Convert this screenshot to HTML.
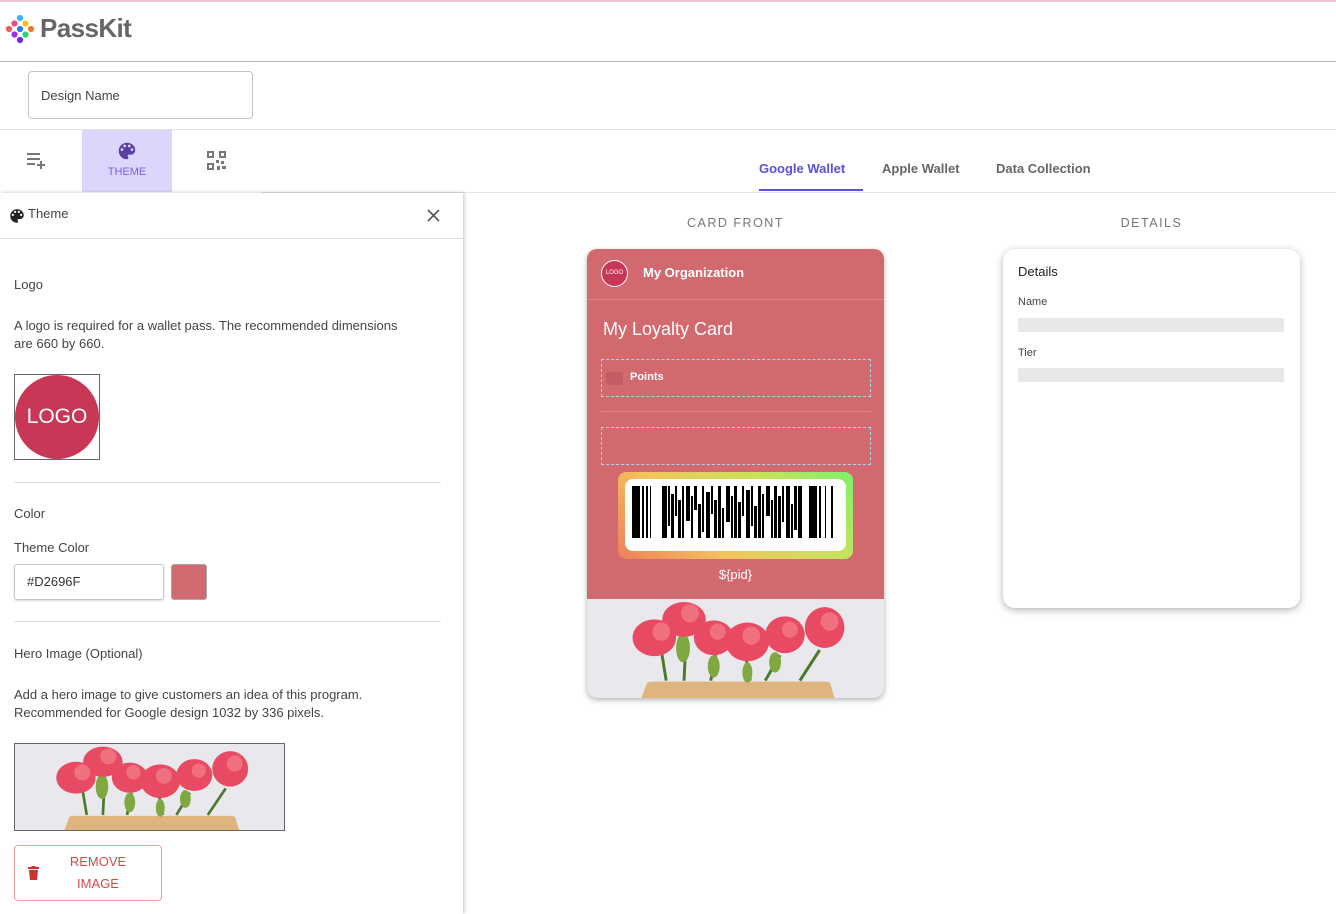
<!DOCTYPE html>
<html><head><meta charset="utf-8">
<style>
*{box-sizing:border-box;margin:0;padding:0}
body{width:1336px;height:914px;overflow:hidden;background:#fff;font-family:"Liberation Sans",sans-serif;color:#333;position:relative}
.a{position:absolute}
.t{font-size:13px;color:#444}
</style></head><body>
<div class="a" style="left:0;top:0;width:1336px;height:2px;background:#f2c6d6"></div>
<svg class="a" style="left:5px;top:14px" width="30" height="30" viewBox="0 0 30 30">
<circle cx="15" cy="4" r="3.1" fill="#3ab4f2"/><circle cx="9.5" cy="9.5" r="3.1" fill="#f24b7a"/><circle cx="20.5" cy="9.5" r="3.1" fill="#f5c518"/>
<circle cx="4" cy="15" r="3.1" fill="#f25a5a"/><circle cx="15" cy="15" r="3.1" fill="#2b7bf2"/><circle cx="26" cy="15" r="3.1" fill="#f27b2b"/>
<circle cx="9.5" cy="20.5" r="3.1" fill="#9b30e8"/><circle cx="20.5" cy="20.5" r="3.1" fill="#2bd47b"/><circle cx="15" cy="26" r="3.1" fill="#6a2be8"/></svg>
<div class="a" style="left:40px;top:13px;font-size:26px;font-weight:bold;color:#666;letter-spacing:-0.6px">PassKit</div>
<div class="a" style="left:0;top:61px;width:1336px;height:1px;background:#bbb"></div>
<div class="a" style="left:28px;top:71px;width:225px;height:48px;border:1px solid #c4c4c4;border-radius:4px"></div>
<div class="a t" style="left:41px;top:88px">Design Name</div>
<div class="a" style="left:0;top:129px;width:1336px;height:1px;background:#e4e4e4"></div>
<svg class="a" style="left:26px;top:152px" width="22" height="18" viewBox="0 0 22 18"><path d="M1 2h13M1 7h13M1 12h8M15 9v8M11 13h8" stroke="#777" stroke-width="2" fill="none"/></svg>
<div class="a" style="left:82px;top:130px;width:90px;height:62px;background:#dcd6fc"></div>
<svg class="a" style="left:116px;top:140px" width="22" height="22" viewBox="0 0 24 24"><path fill="#5b3fa0" d="M12 3a9 9 0 0 0 0 18c.8 0 1.5-.7 1.5-1.5 0-.4-.1-.7-.4-1-.2-.3-.4-.6-.4-1 0-.8.7-1.5 1.5-1.5H16c2.8 0 5-2.2 5-5 0-4.4-4-8-9-8zm-5.5 9a1.5 1.5 0 1 1 0-3 1.5 1.5 0 0 1 0 3zm3-4a1.5 1.5 0 1 1 0-3 1.5 1.5 0 0 1 0 3zm5 0a1.5 1.5 0 1 1 0-3 1.5 1.5 0 0 1 0 3zm3 4a1.5 1.5 0 1 1 0-3 1.5 1.5 0 0 1 0 3z"/></svg>
<div class="a" style="left:82px;top:166px;width:90px;text-align:center;font-size:11px;color:#7a62e0">THEME</div>
<svg class="a" style="left:207px;top:151px" width="20" height="19" viewBox="0 0 20 19" fill="#777"><rect x="0" y="0" width="7" height="7"/><rect x="2" y="2" width="3" height="3" fill="#fff"/><rect x="12" y="0" width="7" height="7"/><rect x="14" y="2" width="3" height="3" fill="#fff"/><rect x="0" y="12" width="7" height="7"/><rect x="2" y="14" width="3" height="3" fill="#fff"/><rect x="9" y="9" width="3" height="3"/><rect x="14" y="10" width="3" height="3"/><rect x="10" y="15" width="3" height="4"/><rect x="15" y="15" width="4" height="3"/></svg>
<div class="a" style="left:759px;top:161px;font-size:13px;font-weight:bold;color:#5a4fe0">Google Wallet</div>
<div class="a" style="left:759px;top:189px;width:104px;height:2px;background:#5a4fe0"></div>
<div class="a" style="left:882px;top:161px;font-size:13px;font-weight:bold;color:#666">Apple Wallet</div>
<div class="a" style="left:996px;top:161px;font-size:13px;font-weight:bold;color:#666">Data Collection</div>
<div class="a" style="left:262px;top:192px;width:1074px;height:1px;background:#e4e4e4"></div>
<div class="a" style="left:0;top:193px;width:463px;height:721px;background:#fff;box-shadow:1px 0 4px rgba(0,0,0,.25)"></div>
<svg class="a" style="left:8px;top:207px" width="18" height="18" viewBox="0 0 24 24"><path fill="#222" d="M12 3a9 9 0 0 0 0 18c.8 0 1.5-.7 1.5-1.5 0-.4-.1-.7-.4-1-.2-.3-.4-.6-.4-1 0-.8.7-1.5 1.5-1.5H16c2.8 0 5-2.2 5-5 0-4.4-4-8-9-8zm-5.5 9a1.5 1.5 0 1 1 0-3 1.5 1.5 0 0 1 0 3zm3-4a1.5 1.5 0 1 1 0-3 1.5 1.5 0 0 1 0 3zm5 0a1.5 1.5 0 1 1 0-3 1.5 1.5 0 0 1 0 3zm3 4a1.5 1.5 0 1 1 0-3 1.5 1.5 0 0 1 0 3z"/></svg>
<div class="a t" style="left:28px;top:206px">Theme</div>
<svg class="a" style="left:427px;top:209px" width="13" height="13" viewBox="0 0 13 13"><path d="M1 1l11 11M12 1L1 12" stroke="#555" stroke-width="1.6"/></svg>
<div class="a" style="left:0;top:238px;width:463px;height:1px;background:#e0e0e0"></div>
<div class="a t" style="left:14px;top:277px">Logo</div>
<div class="a t" style="left:14px;top:317px;line-height:18px;width:405px">A logo is required for a wallet pass. The recommended dimensions are 660 by 660.</div>
<div class="a" style="left:14px;top:374px;width:86px;height:86px;border:1px solid #666"></div>
<div class="a" style="left:15px;top:375px;width:84px;height:84px;border-radius:50%;background:#c93756;color:#fff;font-size:21px;text-align:center;line-height:84px">LOGO</div>
<div class="a" style="left:14px;top:482px;width:427px;height:1px;background:#e0e0e0"></div>
<div class="a t" style="left:14px;top:506px">Color</div>
<div class="a t" style="left:14px;top:540px">Theme Color</div>
<div class="a" style="left:14px;top:564px;width:150px;height:36px;border:1px solid #c4c4c4;border-radius:3px;box-shadow:0 1px 2px rgba(0,0,0,.15)"></div>
<div class="a t" style="left:27px;top:574px;color:#333">#D2696F</div>
<div class="a" style="left:171px;top:564px;width:36px;height:36px;background:#d2696f;border:1px solid #aaa;border-radius:3px"></div>
<div class="a" style="left:14px;top:621px;width:427px;height:1px;background:#e0e0e0"></div>
<div class="a t" style="left:14px;top:646px">Hero Image (Optional)</div>
<div class="a t" style="left:14px;top:686px;line-height:18px">Add a hero image to give customers an idea of this program.<br>Recommended for Google design 1032 by 336 pixels.</div>
<svg class="a" style="left:14px;top:743px;border:1px solid #666" width="271" height="88" viewBox="0 0 300 97" preserveAspectRatio="none">
<defs><g id="fl"><rect width="300" height="97" fill="#e9e8ec"/>
<path d="M55 97 L60 84 Q60 81 66 81 L240 81 Q246 81 246 84 L250 97Z" fill="#deb57e"/>
<g stroke="#4d7a2a" stroke-width="3" fill="none"><path d="M75 50 L80 80M100 40 L98 80M130 55 L125 80M160 55 L165 80M195 55 L180 80M235 50 L215 80"/></g>
<g fill="#7fa840"><ellipse cx="97" cy="48" rx="7" ry="14"/><ellipse cx="128" cy="66" rx="6" ry="11"/><ellipse cx="162" cy="72" rx="5" ry="10"/><ellipse cx="190" cy="62" rx="6" ry="10"/></g>
<g fill="#e84a63"><ellipse cx="68" cy="38" rx="22" ry="18"/><ellipse cx="98" cy="20" rx="22" ry="17"/><ellipse cx="128" cy="38" rx="20" ry="17"/><ellipse cx="162" cy="42" rx="22" ry="19"/><ellipse cx="200" cy="35" rx="20" ry="18"/><ellipse cx="240" cy="28" rx="20" ry="20"/></g>
<g fill="#f07080"><circle cx="75" cy="32" r="9"/><circle cx="104" cy="14" r="9"/><circle cx="132" cy="32" r="8"/><circle cx="166" cy="36" r="9"/><circle cx="205" cy="30" r="8"/><circle cx="245" cy="22" r="9"/></g></g></defs>
<use href="#fl"/></svg>
<div class="a" style="left:14px;top:845px;width:148px;height:56px;border:1px solid #f09a9a;border-radius:4px"></div>
<svg class="a" style="left:28px;top:866px" width="11" height="14" viewBox="0 0 11 14"><rect x="0" y="1" width="11" height="2" fill="#d32f2f"/><rect x="3.5" y="0" width="4" height="2" fill="#d32f2f"/><path d="M1 4h9l-1 10H2z" fill="#d32f2f"/></svg>
<div class="a" style="left:60px;top:851px;width:76px;text-align:center;font-size:13px;line-height:22px;color:#d84a4a">REMOVE<br>IMAGE</div>
<div class="a" style="left:587px;top:216px;width:297px;text-align:center;font-size:12.5px;letter-spacing:1.5px;color:#777">CARD FRONT</div>
<div class="a" style="left:587px;top:249px;width:297px;height:449px;border-radius:10px;background:#d2696f;box-shadow:0 2px 6px rgba(0,0,0,.3);overflow:hidden">
<div class="a" style="left:14px;top:11px;width:27px;height:27px;border-radius:50%;background:#c93756;border:1.5px solid #fff;color:#fff;font-size:6px;text-align:center;line-height:24px">LOGO</div>
<div class="a" style="left:56px;top:16px;font-size:13px;color:#fff;font-weight:bold">My Organization</div>
<div class="a" style="left:0;top:50px;width:297px;height:1px;background:#dc8489"></div>
<div class="a" style="left:16px;top:70px;font-size:18px;color:#fff">My Loyalty Card</div>
<div class="a" style="left:14px;top:110px;width:270px;height:38px;border:1px dashed #a9d6ea"></div>
<div class="a" style="left:19px;top:123px;width:17px;height:13px;border-radius:3px;background:#c45c66"></div>
<div class="a" style="left:43px;top:122px;font-size:11px;color:#fff;font-weight:bold">Points</div>
<div class="a" style="left:14px;top:162px;width:270px;height:1px;background:#dc8489"></div>
<div class="a" style="left:14px;top:178px;width:270px;height:38px;border:1px dashed #a9d6ea"></div>
<div class="a" style="left:31px;top:223px;width:235px;height:87px;border-radius:8px;background:linear-gradient(45deg,#ef7f5c,#f3c45c 35%,#c8e25c 70%,#7ff06a)"></div>
<div class="a" style="left:38px;top:230px;width:221px;height:72px;border-radius:8px;background:#fff"></div>
<svg class="a" style="left:45px;top:237px" width="208" height="52" viewBox="0 0 208 52" preserveAspectRatio="none">
<g fill="#000">
<rect x="0" y="0" width="8" height="52"/><rect x="10" y="0" width="2" height="52"/><rect x="14" y="0" width="2" height="52"/><rect x="18" y="0" width="1" height="52"/>
<rect x="30" y="0" width="5" height="52"/>
<rect x="36" y="0" width="2" height="40"/><rect x="39" y="8" width="3" height="44"/><rect x="43" y="0" width="2" height="30"/><rect x="46" y="14" width="3" height="38"/><rect x="50" y="0" width="2" height="52"/>
<rect x="54" y="0" width="4" height="35"/><rect x="59" y="10" width="2" height="42"/><rect x="62" y="0" width="3" height="24"/><rect x="66" y="18" width="3" height="34"/><rect x="70" y="0" width="2" height="46"/>
<rect x="74" y="6" width="4" height="46"/><rect x="79" y="0" width="2" height="28"/><rect x="82" y="14" width="3" height="38"/><rect x="86" y="0" width="3" height="52"/><rect x="90" y="22" width="2" height="30"/>
<rect x="94" y="0" width="4" height="36"/><rect x="99" y="10" width="2" height="42"/><rect x="102" y="0" width="3" height="52"/><rect x="106" y="16" width="3" height="36"/><rect x="110" y="0" width="2" height="30"/>
<rect x="114" y="4" width="4" height="48"/><rect x="119" y="0" width="2" height="40"/><rect x="122" y="20" width="3" height="32"/><rect x="126" y="0" width="3" height="52"/><rect x="130" y="8" width="2" height="44"/>
<rect x="134" y="0" width="4" height="30"/><rect x="139" y="14" width="2" height="38"/><rect x="142" y="0" width="3" height="52"/><rect x="146" y="10" width="3" height="42"/><rect x="150" y="0" width="2" height="36"/>
<rect x="154" y="0" width="4" height="52"/><rect x="159" y="18" width="2" height="34"/><rect x="162" y="0" width="3" height="44"/><rect x="166" y="0" width="4" height="52"/>
<rect x="177" y="0" width="8" height="52"/><rect x="187" y="0" width="2" height="52"/><rect x="193" y="0" width="1" height="52"/><rect x="199" y="0" width="2" height="52"/>
</g></svg>
<div class="a" style="left:0;top:318px;width:297px;text-align:center;font-size:13px;color:#fff">${pid}</div>
<svg class="a" style="left:0;top:350px" width="297" height="99" viewBox="0 0 300 97" preserveAspectRatio="none"><use href="#fl"/></svg>
</div>
<div class="a" style="left:1003px;top:216px;width:297px;text-align:center;font-size:12.5px;letter-spacing:1.5px;color:#777">DETAILS</div>
<div class="a" style="left:1003px;top:249px;width:297px;height:359px;border-radius:12px;background:#fff;box-shadow:0 2px 8px rgba(0,0,0,.3)">
<div class="a" style="left:15px;top:15px;font-size:13px;color:#222">Details</div>
<div class="a" style="left:15px;top:47px;font-size:11px;color:#444">Name</div>
<div class="a" style="left:15px;top:69px;width:266px;height:14px;background:#e8e8e8"></div>
<div class="a" style="left:15px;top:98px;font-size:11px;color:#444">Tier</div>
<div class="a" style="left:15px;top:119px;width:266px;height:14px;background:#e8e8e8"></div>
</div>
</body></html>
